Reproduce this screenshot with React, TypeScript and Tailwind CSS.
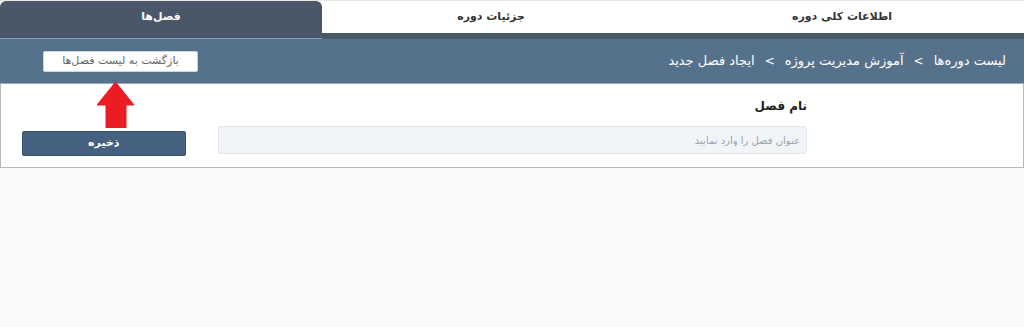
import React from 'react';

const tabs = [
    { id: 'info', label: 'اطلاعات کلی دوره', width: 'w-[364px]', active: false },
    { id: 'details', label: 'جزئیات دوره', width: 'w-[338px]', active: false },
    { id: 'chapters', label: 'فصل‌ها', width: 'w-[322px]', active: true },
];

const crumbs = ['لیست دوره‌ها', 'آموزش مدیریت پروژه', 'ایجاد فصل جدید'];

const App: React.FC = () => {
    return (
        <div dir="rtl" className="relative w-[1024px] h-[327px] bg-[#f8f9fa] font-['DejaVu_Sans',sans-serif] overflow-hidden">
            {/* تب‌ها */}
            <div className="flex h-[39px] bg-white border-t border-[#e6e6e6]">
                {tabs.map((tab) =>
                    tab.active ? (
                        <div
                            key={tab.id}
                            className={`${tab.width} flex items-center justify-center bg-[#4a5769] text-white text-[11px] font-bold rounded-t-[6px] border-b border-[#8c9db0] pb-[5px]`}
                        >
                            {tab.label}
                        </div>
                    ) : (
                        <div
                            key={tab.id}
                            className={`${tab.width} flex items-center justify-center bg-white text-[#333] text-[11px] font-bold border-b-[6px] border-[#4a5769]`}
                        >
                            {tab.label}
                        </div>
                    )
                )}
            </div>

            {/* نوار بالا */}
            <div className="flex items-center justify-between h-[45px] bg-[#56718b] pr-[18px] pl-[43px] border-b border-[#9aa6b2]">
                <div className="flex items-center gap-[10px] text-white text-[13px]">
                    {crumbs.map((c, i) => (
                        <React.Fragment key={c}>
                            {i > 0 && <span className="text-[12px]">&gt;</span>}
                            <span>{c}</span>
                        </React.Fragment>
                    ))}
                </div>
                <button className="w-[155px] h-[21px] bg-white border border-[#cfd5dc] rounded-[2px] text-[#666] text-[11px]">
                    بازگشت به لیست فصل‌ها
                </button>
            </div>

            {/* فرم */}
            <div className="flex items-start gap-[32px] h-[84px] bg-white border-x border-b border-[#b9b9b9] pr-[216px] pl-[21px] pt-[12px]">
                <div className="w-[591px] flex flex-col">
                    <label className="h-[20px] leading-[20px] text-[12px] font-bold text-[#222]">نام فصل</label>
                    <input
                        placeholder="عنوان فصل را وارد نمایید"
                        className="mt-[10px] h-[28px] px-[6px] bg-[#f1f4f8] border border-[#e2e7ee] rounded-[2px] text-[10px] placeholder:text-[#9aa3ad] outline-none"
                    />
                </div>
                <button className="mt-[35px] w-[164px] h-[25px] bg-[#45617f] border border-[#3a536d] rounded-[2px] text-white text-[11px] font-bold">
                    ذخیره
                </button>
            </div>

            {/* فلش قرمز */}
            <svg className="absolute left-[97px] top-[82px]" width="37" height="46" viewBox="0 0 37 46">
                <polygon points="18.5,0 37,23 29,23 29,46 9,46 9,23 0,23" fill="#ec1c24" strokeLinejoin="round" stroke="#ec1c24" strokeWidth="1" />
            </svg>
        </div>
    );
};

export default App;
